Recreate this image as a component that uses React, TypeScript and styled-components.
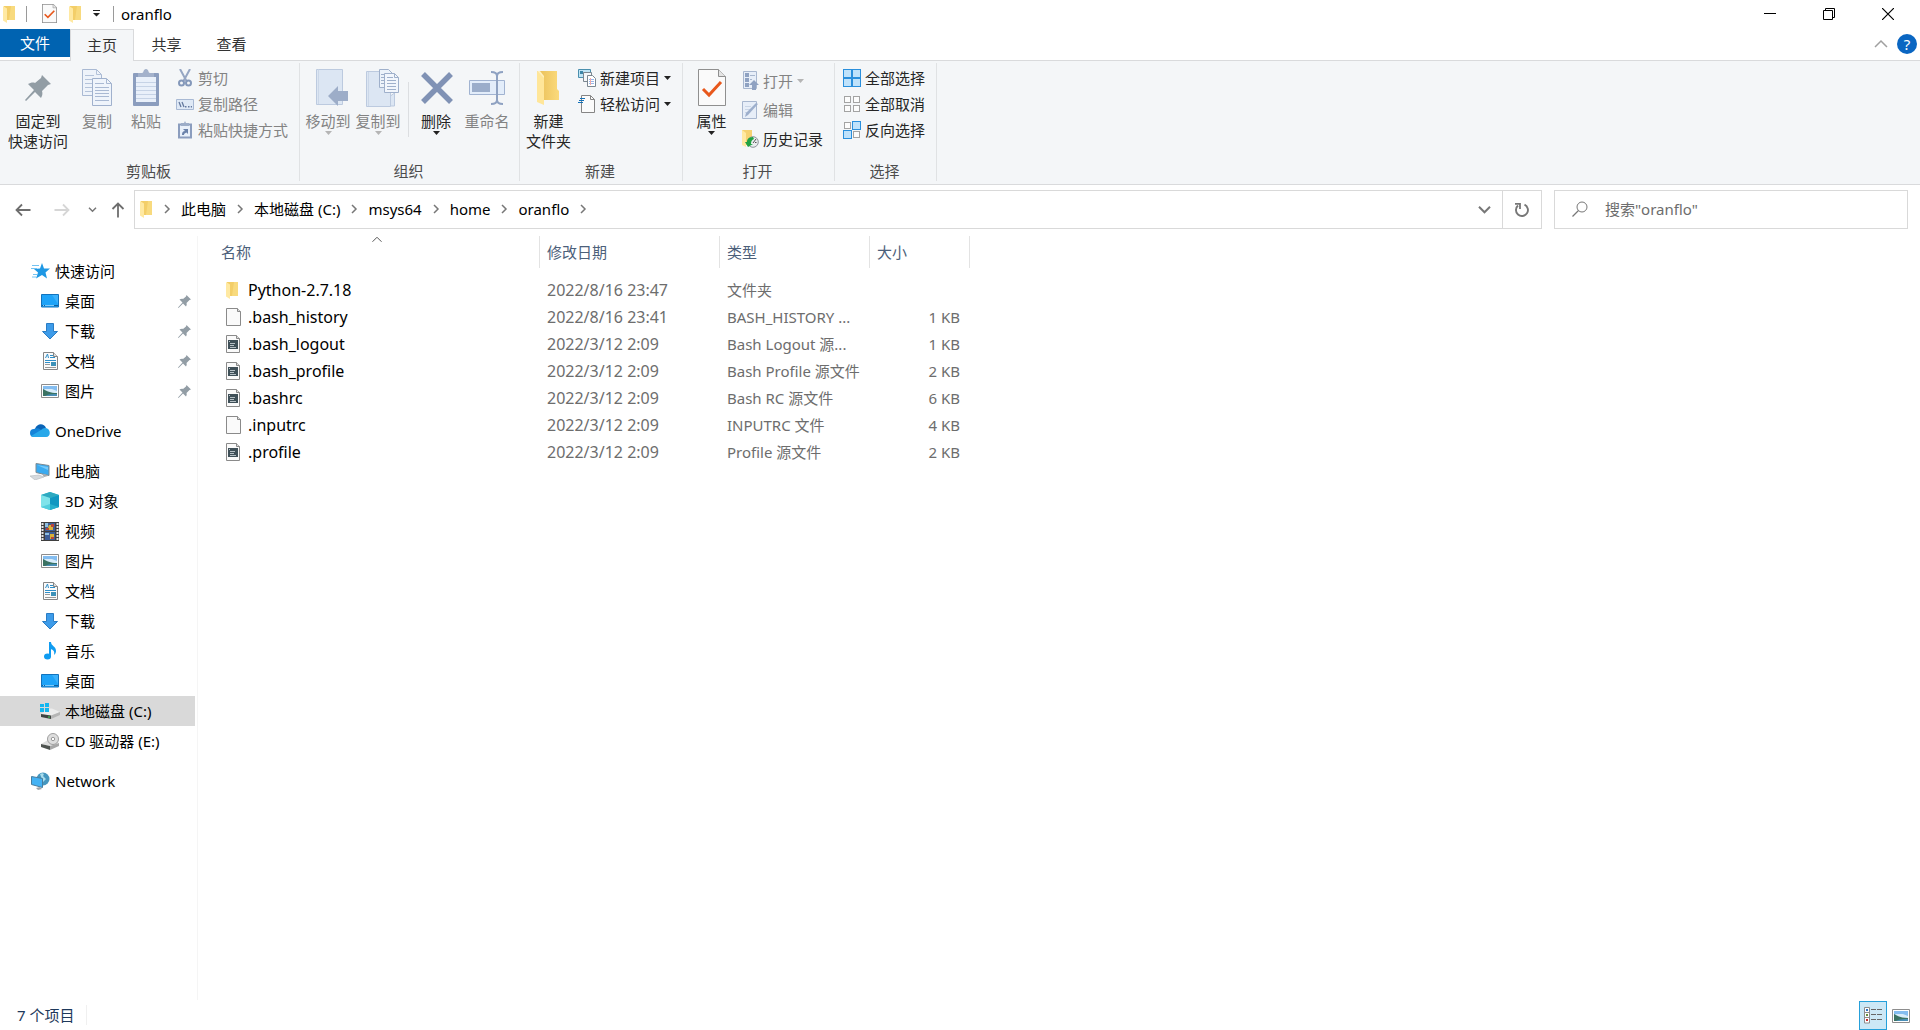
import React from "react";
import styled, { createGlobalStyle, css } from "styled-components";

const GlobalStyle = createGlobalStyle`
  * { box-sizing: border-box; }
  body {
    margin: 0;
    background: #fff;
    color: #000;
    font: 15px/20px "Noto Sans", "Noto Sans CJK SC", sans-serif;
  }
  button, input { font: inherit; color: inherit; }
  svg { display: block; flex: none; }
`;

const plainButton = css`
  padding: 0;
  border: 0;
  background: none;
  cursor: default;
`;

/* ---------- icons ---------- */

const FolderSmall = () => (
  <svg width="13" height="18" viewBox="0 0 13 18">
    <path d="M1 1h11v14H1z" fill="#f3ce68" />
    <path d="M8 1h4v14H6z" fill="#f8da7e" />
    <path d="M0 1l4 2.500V18L0 15.500z" fill="#ffe9a2" />
  </svg>
);

const FolderLarge = () => (
  <svg width="26" height="36" viewBox="0 0 26 36">
    <defs>
      <linearGradient id="folderBack" x1="0" x2="1">
        <stop offset="0" stopColor="#e9bf57" />
        <stop offset="1" stopColor="#fbda7c" />
      </linearGradient>
    </defs>
    <path d="M1 1h20v18l2 2v9H6z" fill="url(#folderBack)" />
    <path d="M1 1l7 6v28L1 32z" fill="#ffe699" />
    <path d="M1 1h3l4 5v2z" fill="#fff0bd" />
  </svg>
);

const CheckPage = ({ large }: { large?: boolean }) => (
  <svg width={large ? 28 : 15} height={large ? 37 : 19} viewBox="0 0 28 37" preserveAspectRatio="none">
    <path d="M.5.500h20l7 7v29H.5z" fill="#fafafa" stroke="#8f8f8f" strokeWidth={large ? 1 : 2} />
    <path d="M20.500.500v7h7" fill="#e4e4e4" stroke="#8f8f8f" />
    <path d="M5 20l6 6L23 13" fill="none" stroke="#e8581c" strokeWidth="3" />
  </svg>
);

const Caret = ({ color = "#222" }: { color?: string }) => (
  <svg width="7" height="4" viewBox="0 0 7 4">
    <path d="M0 0h7L3.500 4z" fill={color} />
  </svg>
);

const CustomizeIcon = () => (
  <svg width="7" height="7" viewBox="0 0 7 7">
    <path d="M0 0h7v1H0zM0 3h7L3.500 6.500z" fill="#222" />
  </svg>
);

const Pin = ({ size }: { size: number }) => (
  <svg width={size} height={size} viewBox="0 0 26 26">
    <path d="M17 0l9 9-3 1-6 6c1 3 0 5-1 7l-6-6L1 26l-1-1 9-10-6-6c2-1 5-2 7-1l6-5z" fill="#929da5" />
  </svg>
);

const CopyLarge = () => (
  <svg width="30" height="37" viewBox="0 0 30 37">
    <path d="M.5.500h14l5 5v21H.5z" fill="#eef3fa" stroke="#a9b9d3" />
    <path d="M14.500.500v5h5M3 6.500h9M3 10.500h8M3 14.500h8M3 18.500h8M3 22.500h8" fill="none" stroke="#b4c3da" />
    <path d="M10.500 9.500h14l5 5v22h-19z" fill="#eff4fb" stroke="#a0b1cd" />
    <path d="M24.500 9.500v5h5M13 14.500h9M13 18.500h14M13 21.500h14M13 24.500h14M13 27.500h14M13 31.500h14" fill="none" stroke="#a9b9d3" />
  </svg>
);

const PasteLarge = () => (
  <svg width="26" height="37" viewBox="0 0 26 37">
    <rect y="4" width="26" height="33" rx="1" fill="#8b9dbe" />
    <path d="M3 8h20v25H3z" fill="#e9f0fa" />
    <path d="M3 13.500h20M3 17.500h20M3 21.500h20M3 25.500h20M3 29.500h20" stroke="#c6d3e6" />
    <path d="M5 4h4c2 0 1-4 4-4s2 4 4 4h4v4H5z" fill="#a3b1cb" />
  </svg>
);

const Scissors = () => (
  <svg width="14" height="18" viewBox="0 0 14 18">
    <path d="M2 0l6.500 12M12 0L5.500 12" stroke="#96a6c3" strokeWidth="2" />
    <circle cx="3.500" cy="14" r="2.500" fill="none" stroke="#8498ba" strokeWidth="2" />
    <circle cx="10.500" cy="14" r="2.500" fill="none" stroke="#8498ba" strokeWidth="2" />
  </svg>
);

const CopyPath = () => (
  <svg width="18" height="11" viewBox="0 0 18 11">
    <path d="M.5.500h17v10H.5z" fill="#dfe9f6" stroke="#a8b9d4" />
    <path d="M3 3l2 5M6 3l2 5" stroke="#64799f" strokeWidth="1.300" />
    <path d="M9 7h1.500v1.500H9zM12 7h1.500v1.500H12zM14.800 7h1.200v1.500h-1.200z" fill="#64799f" />
  </svg>
);

const PasteShortcut = () => (
  <svg width="14" height="18" viewBox="0 0 14 18">
    <path d="M1 3.500h12v13H1z" fill="#e9f0fa" stroke="#8b9dbe" strokeWidth="2" />
    <path d="M3 2h3l1-2 1 2h3v3H3z" fill="#9dadc8" />
    <path d="M4 14c0-3 1-4 3-4L5 8h5v5L8.500 11.500C7 12 6 12.500 6 14z" fill="#6b82aa" />
  </svg>
);

const MoveTo = () => (
  <svg width="41" height="37" viewBox="-8 0 41 37">
    <path d="M.5.500h26v35H.5z" fill="#dce6f3" stroke="#bccadf" />
    <path d="M2.500.500V35" stroke="#cbd7e8" />
    <path d="M12 27l10-10v5h10v10H22v5z" fill="#9dadc8" />
  </svg>
);

const CopyTo = () => (
  <svg width="42" height="38" viewBox="-9 0 42 38">
    <path d="M.5 2.500h24v35H.5zM24.500 27l4-3v13h-4z" fill="#dce6f3" stroke="#bccadf" />
    <path d="M2.500 3v34" stroke="#cbd7e8" />
    <path d="M13.500.500h9l4 4v14h-13z" fill="#edf3fa" stroke="#9fb0cb" />
    <path d="M18.500 4.500h10l4 4v15h-14z" fill="#f2f6fc" stroke="#9fb0cb" />
    <path d="M28.500 4.500v4h4M21 8.500h6M21 11.500h9M21 14.500h9M21 17.500h9M21 20.500h9M15 5.500h3M15 8.500h3M15 11.500h3M15 14.500h3" fill="none" stroke="#9fb0cb" />
  </svg>
);

const DeleteIcon = () => (
  <svg width="34" height="32" viewBox="-2 0 34 32">
    <path d="M2 2l28 28M30 2L2 30" stroke="#8092b5" strokeWidth="5.500" />
  </svg>
);

const RenameIcon = () => (
  <svg width="36" height="34" viewBox="0 0 36 34">
    <path d="M.5 9.500h35v14H.5z" fill="#e3edfa" stroke="#a1b3d1" />
    <path d="M3 12h18v9H3z" fill="#9badca" />
    <path d="M22 1c4 0 6 1 6 4v24c0 3-2 4-6 4M34 1c-4 0-6 1-6 4v24c0 3 2 4 6 4" fill="none" stroke="#8fa2c2" strokeWidth="2" />
  </svg>
);

const NewItem = () => (
  <svg width="18" height="18" viewBox="0 0 18 18">
    <path d="M.5.500h12v8H.5z" fill="#bfe4f5" stroke="#4a8fae" />
    <path d="M2 2h3v3H2z" fill="#3c86a8" />
    <path d="M5.500 3.500h8v9h-8z" fill="#f5f7f9" stroke="#7b8791" />
    <path d="M9.500 6.500h5l3 3v8h-8z" fill="#fff" stroke="#7b8791" />
    <path d="M11 10.500h5M11 12.500h5M11 14.500h5" stroke="#98b7ec" />
    <path d="M12.500 9v7" stroke="#f0a9a9" />
  </svg>
);

const EasyAccess = () => (
  <svg width="18" height="18" viewBox="0 0 18 18">
    <path d="M3.500.500h9l4 4v13h-13z" fill="#fbfbfb" stroke="#858585" />
    <path d="M12.500.500v4h4" fill="none" stroke="#858585" />
    <path d="M2 3.500h5M1 5.500h5M0 7.500h5" stroke="#1672b8" strokeWidth="1.200" />
  </svg>
);

const OpenIcon = () => (
  <svg width="17" height="19" viewBox="0 0 17 19">
    <path d="M1.500.500h13v17h-13z" fill="#e7eef8" stroke="#a8b7cf" />
    <path d="M3 2h4v4H3zM3 7h4v4H3zM3 12h4v4H3z" fill="#8fa2c2" />
    <path d="M8 4.500h5M8 8.500h2" stroke="#a7b6cd" />
    <path d="M12 9l5 5h-3v5h-4v-5H7z" fill="#8fa2c2" />
  </svg>
);

const EditIcon = () => (
  <svg width="16" height="18" viewBox="0 0 16 18">
    <path d="M.5.500h14v17H.5z" fill="#e7eef8" stroke="#a8b7cf" />
    <path d="M3 5.500h6M3 8.500h5M3 11.500h3" stroke="#c9d5e6" />
    <path d="M3 16l1-4L14 2l2 1L6 14z" fill="#9dafcc" />
  </svg>
);

const HistoryIcon = () => (
  <svg width="18" height="18" viewBox="0 0 18 18">
    <path d="M1 0h10v15H1z" fill="#f5d271" />
    <path d="M1 0l4 3v14l-4-2z" fill="#ffe9a2" />
    <circle cx="12" cy="12" r="5.300" fill="#e9ecee" stroke="#8c949a" />
    <path d="M12 13l3-4M14 12.500h1.500" fill="none" stroke="#555" />
    <path d="M12 7c-5 0-6 3-6 5H4l3 5 5-3h-2c0-3 1-4 3-5z" fill="#21a243" />
  </svg>
);

const SelectIcon = ({ filled }: { filled: boolean[] }) => (
  <svg width="18" height="18" viewBox="0 0 18 18">
    {filled.map((on, i) => {
      const x = (i % 2) * 9;
      const y = Math.floor(i / 2) * 9;
      return on ? (
        <rect key={i} x={x + 0.5} y={y + 0.5} width="8" height="8" fill="#bfe2fb" stroke="#2a8fdc" />
      ) : (
        <rect key={i} x={x + 1.5} y={y + 1.5} width="6" height="6" fill="#fcfcfc" stroke="#a3a3a3" />
      );
    })}
  </svg>
);

type ChevronProps = { dir: "right" | "down" | "up"; color?: string; w?: number; width?: number };
const Chevron = ({ dir, color = "#777", w = 7, width = 1.5 }: ChevronProps) => {
  const h = w / 2;
  const box = w + 2;
  const points = {
    right: `M${box / 2 - h / 2} 1l${h} ${h}l${-h} ${h}`,
    down: `M1 ${box / 2 - h / 2}l${h} ${h}l${h} ${-h}`,
    up: `M1 ${box / 2 + h / 2}l${h} ${-h}l${h} ${h}`,
  };
  return (
    <svg width={box} height={box} viewBox={`0 0 ${box} ${box}`}>
      <path d={points[dir]} fill="none" stroke={color} strokeWidth={width} />
    </svg>
  );
};

const Arrow = ({ dir, color }: { dir: "left" | "right" | "up"; color: string }) => {
  const turn = { left: 0, right: 180, up: 90 }[dir];
  return (
    <svg width="16" height="16" viewBox="0 0 16 16">
      <path d="M15.500 8H1.500M7 2.500L1.500 8L7 13.500" transform={`rotate(${turn} 8 8)`} fill="none" stroke={color} strokeWidth="1.800" />
    </svg>
  );
};

const RefreshIcon = () => (
  <svg width="16" height="16" viewBox="0 0 16 16">
    <path d="M10.500 2.600A6 6 0 1 1 4 3.500" fill="none" stroke="#777" strokeWidth="1.900" />
    <path d="M1 1.900h5v5" fill="none" stroke="#777" strokeWidth="1.800" />
  </svg>
);

const SearchIcon = () => (
  <svg width="16" height="16" viewBox="0 0 16 16">
    <circle cx="10" cy="6" r="5" fill="none" stroke="#777" />
    <path d="M6.500 9.500L.5 15.500" stroke="#777" strokeWidth="1.200" />
  </svg>
);

const StarIcon = () => (
  <svg width="19" height="16" viewBox="0 0 19 16">
    <path d="M11 0l2 5.500h6l-4.500 4 1.500 6L11 12l-6 3.500L7 9.500 3 6l6-.5z" fill="#1f98e4" />
    <path d="M1 2.500h7M0 5.500h6M2 11.500h4M1 14h4" stroke="#74c3f2" />
  </svg>
);

const DesktopIcon = () => (
  <svg width="18" height="14" viewBox="0 0 18 14">
    <path d="M.5.500h17v12.500H.5z" fill="#1ea3f8" stroke="#1273bd" />
    <path d="M11 1h6v9z" fill="#3bb1fb" />
    <path d="M1 11.500h16" stroke="#0e5f9d" />
    <path d="M2 11.500h1M4 11.500h9" stroke="#7fcbfa" />
  </svg>
);

const DownloadIcon = () => (
  <svg width="16" height="17" viewBox="0 0 16 17">
    <path d="M4.500.500h7v8h4L8 16 .5 8.500h4z" fill="#3d9be9" stroke="#2a7cc4" />
  </svg>
);

const DocumentIcon = () => (
  <svg width="15" height="18" viewBox="0 0 15 18">
    <path d="M.5.500h10l4 4v13H.5z" fill="#fbfbfb" stroke="#858585" />
    <path d="M10.500.500v4h4" fill="#ddd" stroke="#858585" />
    <path d="M2.500 6l2-4 1 4M7 3.500h3M7 5.500h5M2 8.500h11M2 10.500h5" fill="none" stroke="#2f8fc9" />
    <path d="M2 12.500h5M2 15.500h11" stroke="#999" />
    <path d="M8 10h5v4H8z" fill="#3d91b8" />
  </svg>
);

const PictureIcon = () => (
  <svg width="18" height="14" viewBox="0 0 18 14">
    <path d="M.5.500h17v13H.5z" fill="#fff" stroke="#8d8d8d" />
    <path d="M2 2h14v10H2z" fill="#84bdf0" />
    <path d="M4 5h7l5 2v2H2V6z" fill="#d8ecfa" />
    <path d="M2 5c4 2 7 4 14 4v3H2z" fill="#3b7363" />
    <path d="M4 12c4-2 8-2 12-2v2z" fill="#4a8fb8" />
  </svg>
);

const CloudIcon = () => (
  <svg width="20" height="14" viewBox="0 0 20 14">
    <path d="M5 5c2-6 9-6 11-1l-4 5-8-2z" fill="#0a64b7" />
    <path d="M4 13a4 4 0 0 1 0-8c4-2 6 0 11 4l-2 4z" fill="#1583d8" />
    <path d="M16 4c5 1 5 9 0 9H4c-2 0-3-1-3-1l10-6c2-2 4-2 5-2z" fill="#28a8ea" />
  </svg>
);

const ComputerIcon = () => (
  <svg width="20" height="17" viewBox="0 0 20 17">
    <path d="M6 .5l13 2v10l-13-3z" fill="#3aaaf0" stroke="#7f8a91" />
    <path d="M7 2l11 2v3z" fill="#75cafa" />
    <path d="M12 11l2 3 4-1-3-2z" fill="#a5abb0" />
    <path d="M0 13l9-1 5 2-9 3z" fill="#d5d9dd" stroke="#b4b9bd" strokeWidth=".6" />
  </svg>
);

const CubeIcon = () => (
  <svg width="18" height="18" viewBox="0 0 18 18">
    <path d="M9 0l9 3v12l-9 3-9-3V3z" fill="#35bfd3" />
    <path d="M9 0l9 3-9 3-9-3z" fill="#2ea9c0" />
    <path d="M0 3l9 3v12l-9-3z" fill="#7fe3ea" />
    <path d="M18 3L9 6v12l9-3z" fill="#1197c1" />
    <path d="M0 15l9-3 9 3-9 3z" fill="#35bfd3" opacity=".6" />
  </svg>
);

const VideoIcon = () => (
  <svg width="18" height="19" viewBox="0 0 18 19">
    <path d="M0 0h18v19H0z" fill="#3f3f3f" />
    <path d="M1.500 1v18M16.500 1v18" stroke="#e8e8e8" strokeDasharray="2 1" strokeWidth="2" />
    <path d="M4 1h10v8H4zM4 10h10v8H4z" fill="#3d5e98" />
    <path d="M8 3h4v5H6zM9 12h4v5H9z" fill="#d9b13a" />
    <path d="M10 2h3v3h-3zM5 6h3v2H5zM10 15h3v2h-3z" fill="#b8463a" />
    <path d="M4 1h3v4H4zM4 11h4v2H4z" fill="#8fbfe0" />
  </svg>
);

const MusicIcon = () => (
  <svg width="12" height="18" viewBox="0 0 12 18">
    <ellipse cx="3.500" cy="14.500" rx="3.500" ry="3" fill="#109cf1" />
    <path d="M5 0h2c0 4 5 4 5 9 0 2-1 3-2 4 1-4-1-5-3-6v8H5z" fill="#109cf1" />
  </svg>
);

const DriveIcon = () => (
  <svg width="20" height="16" viewBox="0 0 20 16">
    <path d="M1 11L9 5.500h3l8 3.500-9 4z" fill="#ececec" />
    <path d="M1 11l10 1.500V16L1 14z" fill="#3e4441" />
    <path d="M11 12.500L20 9v3l-9 4z" fill="#b5b5b5" />
    <path d="M8 13.500h2v1H8z" fill="#41d95b" />
    <path d="M0 1h4v3H0zM5 0h4v4H5zM0 5h4v4H0zM5 5h4v4H5z" fill="#13b6ef" />
  </svg>
);

const CdIcon = () => (
  <svg width="20" height="17" viewBox="0 0 20 17">
    <path d="M1 11l7-4h5l6 3-9 3z" fill="#dedede" />
    <path d="M1 11l9 2v4l-9-3z" fill="#4e5350" />
    <path d="M10 13l9-3v3l-9 4z" fill="#a8a8a8" />
    <circle cx="13" cy="6" r="5.500" fill="#dedede" stroke="#9f9f9f" />
    <circle cx="13" cy="6" r="1.700" fill="#fff" stroke="#999" />
  </svg>
);

const NetworkIcon = () => (
  <svg width="19" height="18" viewBox="0 0 19 18">
    <circle cx="12" cy="7" r="6.500" fill="#4596be" />
    <path d="M9 2c3-2 5 0 3 2l3 3-3 3z" fill="#a8dcec" />
    <path d="M.5 4.500l11 2v9l-11-3z" fill="#43b2f4" stroke="#477d9f" />
    <path d="M5 16l4-1 2 2-4 1z" fill="#9da4a9" />
  </svg>
);

const BlankFile = () => (
  <svg width="15" height="18" viewBox="0 0 15 18">
    <path d="M.5.500h11l3 3v14H.5z" fill="#fafafa" stroke="#8a8a8a" />
    <path d="M11.500.500v3h3" fill="#ddd" stroke="#8a8a8a" />
  </svg>
);

const ScriptFile = () => (
  <svg width="14" height="18" viewBox="0 0 14 18">
    <path d="M.5.500h10l3 3v14H.5z" fill="#fafafa" stroke="#8a8a8a" />
    <path d="M10.500.500v3h3" fill="#ddd" stroke="#8a8a8a" />
    <path d="M2 5h10v9H2z" fill="#3f5058" />
    <path d="M3 6.500h1M4 8.500h5M4 10.500h4M4 12.500h6" stroke="#b6c0c5" />
  </svg>
);

const DetailsIcon = () => (
  <svg width="18" height="17" viewBox="0 0 18 17">
    <path d="M.5.500h5v15.500h-5zM.5 5.500h5M.5 10.500h5" fill="#fff" stroke="#8d8d8d" />
    <path d="M7 2.500h5M13 2.500h5M7 7.500h5M13 7.500h5M7 12.500h5M13 12.500h5" stroke="#666" />
    <path d="M2 2h2v2H2z" fill="#2d73c4" />
    <path d="M2 7h2v2H2z" fill="#6b8f3c" />
    <path d="M2 12h2v2H2z" fill="#cc2b2b" />
  </svg>
);

/* ---------- window chrome ---------- */

const Window = styled.div`
  display: flex;
  flex-direction: column;
  min-height: 100vh;
`;

const TitleBar = styled.header`
  display: flex;
  align-items: center;
  height: 29px;
  padding: 0 3px 2px 0;
`;

const QuickButton = styled.button<{ $w: number; $gap?: number }>`
  ${plainButton}
  display: flex;
  justify-content: center;
  width: ${(p) => p.$w}px;
  margin-right: ${(p) => p.$gap ?? 0}px;
`;

const TitleRule = styled.span`
  width: 1px;
  height: 16px;
  background: #9a9a9a;
`;

const Title = styled.h1`
  flex: 1;
  margin: 0 0 0 7px;
  font-size: 15px;
  font-weight: 400;
`;

const CaptionButton = styled.button`
  ${plainButton}
  display: flex;
  align-items: center;
  justify-content: center;
  width: 59px;
  height: 27px;
`;

const TabBar = styled.nav`
  display: flex;
  height: 32px;
  border-bottom: 1px solid #d9dadc;
`;

const Tab = styled.button<{ $kind?: "file" | "active" }>`
  ${plainButton}
  width: 65px;
  height: 31px;
  padding-bottom: 2px;
  color: #333;
  ${(p) =>
    p.$kind === "file" &&
    css`
      width: 70px;
      height: 28px;
      padding-bottom: 0;
      background: #0063b1;
      color: #fff;
    `}
  ${(p) =>
    p.$kind === "active" &&
    css`
      width: 64px;
      height: 32px;
      border: 1px solid #d9dadc;
      border-bottom: 0;
      background: #f4f6f8;
    `}
`;

const TabBarEnd = styled.div`
  display: flex;
  align-items: center;
  gap: 9px;
  margin-left: auto;
  padding: 0 3px 2px 0;
`;

const HelpButton = styled.button`
  ${plainButton}
  width: 20px;
  height: 20px;
  border-radius: 50%;
  background: #0a66c2;
  color: #fff;
`;

const IconButton = styled.button`
  ${plainButton}
  display: flex;
  align-items: center;
  justify-content: center;
`;

/* ---------- ribbon ---------- */

const Ribbon = styled.div`
  display: flex;
  padding: 2px 0 3px;
  border-bottom: 1px solid #d9dadc;
  background: #f4f6f8;
`;

const Group = styled.section<{ $w: number }>`
  display: flex;
  flex-direction: column;
  width: ${(p) => p.$w}px;
  border-right: 1px solid #e0e2e4;
`;

const GroupBody = styled.div<{ $pad?: number }>`
  display: flex;
  height: 98px;
  padding-left: ${(p) => p.$pad ?? 0}px;
`;

const GroupName = styled.h2`
  margin: 0;
  padding-right: 2px;
  color: #4c4c4c;
  font-size: 15px;
  font-weight: 400;
  text-align: center;
`;

const LargeButton = styled.button<{ $w: number; $off?: boolean }>`
  ${plainButton}
  display: flex;
  flex-direction: column;
  align-items: center;
  width: ${(p) => p.$w}px;
  padding-top: 4px;
  color: ${(p) => (p.$off ? "#838383" : "#262626")};
  white-space: pre-line;
`;

const LargeIcon = styled.span`
  display: flex;
  align-items: center;
  height: 41px;
  margin-bottom: 3px;
`;

const RibbonRule = styled.span`
  width: 1px;
  height: 55px;
  margin: 19px 0 0 5px;
  background: #dcdee1;
`;

const SmallList = styled.div<{ $row: number; $pad: number }>`
  display: grid;
  grid-auto-rows: ${(p) => p.$row}px;
  align-content: start;
  justify-items: start;
  padding: ${(p) => (p.$row > 26 ? 3 : 2)}px 0 0 ${(p) => p.$pad}px;
`;

const SmallButton = styled.button<{ $off?: boolean }>`
  ${plainButton}
  display: flex;
  align-items: center;
  gap: 4px;
  color: ${(p) => (p.$off ? "#838383" : "#262626")};
  white-space: nowrap;
`;

const SmallIcon = styled.span`
  display: flex;
  justify-content: center;
  width: 18px;
`;

type ButtonProps = { off?: boolean; icon: React.ReactNode; label: string; menu?: boolean };

const Large = ({ w, off, icon, label, menu }: ButtonProps & { w: number }) => (
  <LargeButton $w={w} $off={off}>
    <LargeIcon>{icon}</LargeIcon>
    {label}
    {menu && <Caret color={off ? "#b5b5b5" : undefined} />}
  </LargeButton>
);

const Small = ({ off, icon, label, menu }: ButtonProps) => (
  <SmallButton $off={off}>
    <SmallIcon>{icon}</SmallIcon>
    {label}
    {menu && <Caret color={off ? "#b5b5b5" : undefined} />}
  </SmallButton>
);

/* ---------- address row ---------- */

const AddressRow = styled.div`
  display: flex;
  align-items: center;
  padding: 5px 12px 0 0;
`;

const NavButtons = styled.div`
  display: grid;
  grid-template-columns: 46px 32px 28px 24px;
  width: 134px;
  justify-items: center;
`;

const AddressBox = styled.div`
  display: flex;
  flex: 1;
  align-items: stretch;
  height: 39px;
  border: 1px solid #d9d9d9;
`;

const Crumbs = styled.ol`
  display: flex;
  flex: 1;
  align-items: center;
  margin: 0;
  padding: 0 0 2px 5px;
  list-style: none;
`;

const Crumb = styled.li`
  display: flex;
  align-items: center;
`;

const CrumbMark = styled.span`
  margin: 0 9px;
`;

const CrumbLink = styled.a`
  color: #000;
  text-decoration: none;
`;

const BoxButton = styled.button<{ $ruled?: boolean }>`
  ${plainButton}
  display: flex;
  align-items: center;
  justify-content: center;
  width: ${(p) => (p.$ruled ? 39 : 36)}px;
  border-left: ${(p) => (p.$ruled ? "1px solid #d9d9d9" : "0")};
`;

const SearchBox = styled.label`
  display: flex;
  align-items: center;
  gap: 17px;
  width: 354px;
  height: 39px;
  margin-left: 12px;
  padding: 0 0 2px 17px;
  border: 1px solid #d9d9d9;
`;

const SearchInput = styled.input`
  flex: 1;
  min-width: 0;
  padding: 0;
  border: 0;
  outline: 0;
  background: none;

  &::placeholder { color: #6d6d6d; opacity: 1; }
`;

/* ---------- body ---------- */

const Body = styled.div`
  display: flex;
  flex: 1;
  padding-top: 7px;
`;

const Sidebar = styled.nav`
  display: flex;
  flex-direction: column;
  gap: 10px;
  width: 198px;
  padding: 20px 2px 0 0;
  border-right: 1px solid #f5f5f5;
`;

const Tree = styled.ul`
  margin: 0;
  padding: 0;
  list-style: none;
`;

const TreeLink = styled.a<{ $child?: boolean; $selected?: boolean }>`
  display: flex;
  align-items: center;
  gap: 5px;
  height: 30px;
  padding: 0 4px 0 ${(p) => (p.$child ? 40 : 30)}px;
  background: ${(p) => (p.$selected ? "#d9d9d9" : "none")};
  color: #000;
  text-decoration: none;
`;

const TreeIcon = styled.span`
  display: flex;
  justify-content: center;
  width: 20px;
`;

const TreeLabel = styled.span`
  flex: 1;
`;

const Content = styled.main`
  flex: 1;
  padding-left: 16px;
`;

const FileTable = styled.table`
  width: 756px;
  border-collapse: separate;
  border-spacing: 0;
  table-layout: fixed;

  tbody::before {
    display: block;
    height: 8px;
    content: "";
  }
`;

const HeadCell = styled.th<{ $w: number }>`
  position: relative;
  width: ${(p) => p.$w}px;
  height: 32px;
  padding: 0 7px;
  border-right: 1px solid #e3e3e3;
  font-weight: 400;
  text-align: left;
`;

const SortButton = styled.button`
  ${plainButton}
  color: #4c607a;
`;

const SortMark = styled.span`
  position: absolute;
  top: -2px;
  left: 50%;
  transform: translateX(-50%);
`;

const Cell = styled.td<{ $right?: boolean; $latin?: boolean }>`
  height: 27px;
  padding: 0 ${(p) => (p.$right ? 10 : 7)}px 0 7px;
  overflow: hidden;
  color: #6d6d6d;
  font-size: ${(p) => (p.$latin ? 16 : 15)}px;
  text-align: ${(p) => (p.$right ? "right" : "left")};
  text-overflow: ellipsis;
  white-space: nowrap;
`;

const FileName = styled.a`
  display: flex;
  align-items: center;
  gap: 7px;
  padding-left: 5px;
  color: #000;
  text-decoration: none;
`;

const FileIcon = styled.span`
  width: 15px;
`;

const StatusBar = styled.footer`
  display: flex;
  align-items: center;
  height: 29px;
  margin-top: 1px;
  padding: 0 10px 0 17px;
  color: #1e395b;
`;

const Count = styled.span`
  flex: 1;
  padding-bottom: 2px;
`;

const CountText = styled.span`
  display: inline-block;
  padding-right: 12px;
  border-right: 1px solid #f0f0f0;
`;

const ViewButton = styled.button<{ $on?: boolean }>`
  ${plainButton}
  display: flex;
  align-items: center;
  justify-content: center;
  width: ${(p) => (p.$on ? 28 : 18)}px;
  height: 29px;
  margin-left: 5px;
  border: ${(p) => (p.$on ? "1px solid #26a0da" : "0")};
  background: ${(p) => (p.$on ? "#cce8f6" : "none")};
`;

/* ---------- data ---------- */

type Node = { label: string; icon: React.ReactNode; child?: boolean; pinned?: boolean; selected?: boolean };

const sections: Node[][] = [
  [
    { label: "快速访问", icon: <StarIcon /> },
    { label: "桌面", icon: <DesktopIcon />, child: true, pinned: true },
    { label: "下载", icon: <DownloadIcon />, child: true, pinned: true },
    { label: "文档", icon: <DocumentIcon />, child: true, pinned: true },
    { label: "图片", icon: <PictureIcon />, child: true, pinned: true },
  ],
  [{ label: "OneDrive", icon: <CloudIcon /> }],
  [
    { label: "此电脑", icon: <ComputerIcon /> },
    { label: "3D 对象", icon: <CubeIcon />, child: true },
    { label: "视频", icon: <VideoIcon />, child: true },
    { label: "图片", icon: <PictureIcon />, child: true },
    { label: "文档", icon: <DocumentIcon />, child: true },
    { label: "下载", icon: <DownloadIcon />, child: true },
    { label: "音乐", icon: <MusicIcon />, child: true },
    { label: "桌面", icon: <DesktopIcon />, child: true },
    { label: "本地磁盘 (C:)", icon: <DriveIcon />, child: true, selected: true },
    { label: "CD 驱动器 (E:)", icon: <CdIcon />, child: true },
  ],
  [{ label: "Network", icon: <NetworkIcon /> }],
];

const files = [
  { name: "Python-2.7.18", date: "2022/8/16 23:47", type: "文件夹", size: "", icon: <FolderSmall /> },
  { name: ".bash_history", date: "2022/8/16 23:41", type: "BASH_HISTORY ...", size: "1 KB", icon: <BlankFile /> },
  { name: ".bash_logout", date: "2022/3/12 2:09", type: "Bash Logout 源...", size: "1 KB", icon: <ScriptFile /> },
  { name: ".bash_profile", date: "2022/3/12 2:09", type: "Bash Profile 源文件", size: "2 KB", icon: <ScriptFile /> },
  { name: ".bashrc", date: "2022/3/12 2:09", type: "Bash RC 源文件", size: "6 KB", icon: <ScriptFile /> },
  { name: ".inputrc", date: "2022/3/12 2:09", type: "INPUTRC 文件", size: "4 KB", icon: <BlankFile /> },
  { name: ".profile", date: "2022/3/12 2:09", type: "Profile 源文件", size: "2 KB", icon: <ScriptFile /> },
];

const columns = [
  { label: "名称", w: 326, sorted: true },
  { label: "修改日期", w: 180 },
  { label: "类型", w: 150 },
  { label: "大小", w: 100 },
];

const path = ["此电脑", "本地磁盘 (C:)", "msys64", "home", "oranflo"];

export default function App() {
  return (
    <Window>
      <GlobalStyle />
      <TitleBar>
        <QuickButton $w={18} $gap={8} aria-label="窗口菜单"><FolderSmall /></QuickButton>
        <TitleRule />
        <QuickButton $w={44} aria-label="属性"><CheckPage /></QuickButton>
        <QuickButton $w={8} aria-label="新建文件夹"><FolderSmall /></QuickButton>
        <QuickButton $w={34} aria-label="自定义快速访问工具栏"><CustomizeIcon /></QuickButton>
        <TitleRule />
        <Title>oranflo</Title>
        <CaptionButton aria-label="最小化">
          <svg width="12" height="12" viewBox="0 0 12 12"><path d="M0 5.500h12" stroke="#000" /></svg>
        </CaptionButton>
        <CaptionButton aria-label="还原">
          <svg width="12" height="12" viewBox="0 0 12 12"><path d="M.5 2.500h9v9h-9zM2.500 2.500v-2h9v9h-2" fill="none" stroke="#000" /></svg>
        </CaptionButton>
        <CaptionButton aria-label="关闭">
          <svg width="12" height="12" viewBox="0 0 12 12"><path d="M0 0l12 12M12 0L0 12" stroke="#000" strokeWidth="1.200" /></svg>
        </CaptionButton>
      </TitleBar>
      <TabBar>
        <Tab $kind="file">文件</Tab>
        <Tab $kind="active">主页</Tab>
        <Tab>共享</Tab>
        <Tab>查看</Tab>
        <TabBarEnd>
          <IconButton aria-label="折叠功能区"><Chevron dir="up" w={12} color="#a0a0a0" /></IconButton>
          <HelpButton aria-label="帮助">?</HelpButton>
        </TabBarEnd>
      </TabBar>
      <Ribbon>
        <Group $w={300}>
          <GroupBody $pad={2}>
            <Large w={72} icon={<Pin size={26} />} label={"固定到\n快速访问"} />
            <Large w={46} off icon={<CopyLarge />} label="复制" />
            <Large w={52} off icon={<PasteLarge />} label="粘贴" />
            <SmallList $row={26} $pad={4}>
              <Small off icon={<Scissors />} label="剪切" />
              <Small off icon={<CopyPath />} label="复制路径" />
              <Small off icon={<PasteShortcut />} label="粘贴快捷方式" />
            </SmallList>
          </GroupBody>
          <GroupName>剪贴板</GroupName>
        </Group>
        <Group $w={220}>
          <GroupBody $pad={3}>
            <Large w={50} off menu icon={<MoveTo />} label="移动到" />
            <Large w={50} off menu icon={<CopyTo />} label="复制到" />
            <RibbonRule />
            <Large w={54} menu icon={<DeleteIcon />} label="删除" />
            <Large w={48} off icon={<RenameIcon />} label="重命名" />
          </GroupBody>
          <GroupName>组织</GroupName>
        </Group>
        <Group $w={163}>
          <GroupBody>
            <Large w={57} icon={<FolderLarge />} label={"新建\n文件夹"} />
            <SmallList $row={26} $pad={1}>
              <Small menu icon={<NewItem />} label="新建项目" />
              <Small menu icon={<EasyAccess />} label="轻松访问" />
            </SmallList>
          </GroupBody>
          <GroupName>新建</GroupName>
        </Group>
        <Group $w={152}>
          <GroupBody>
            <Large w={57} menu icon={<CheckPage large />} label="属性" />
            <SmallList $row={29} $pad={1}>
              <Small off menu icon={<OpenIcon />} label="打开" />
              <Small off icon={<EditIcon />} label="编辑" />
              <Small icon={<HistoryIcon />} label="历史记录" />
            </SmallList>
          </GroupBody>
          <GroupName>打开</GroupName>
        </Group>
        <Group $w={102}>
          <GroupBody>
            <SmallList $row={26} $pad={8}>
              <Small icon={<SelectIcon filled={[true, true, true, true]} />} label="全部选择" />
              <Small icon={<SelectIcon filled={[false, false, false, false]} />} label="全部取消" />
              <Small icon={<SelectIcon filled={[false, true, true, false]} />} label="反向选择" />
            </SmallList>
          </GroupBody>
          <GroupName>选择</GroupName>
        </Group>
      </Ribbon>
      <AddressRow>
        <NavButtons>
          <IconButton aria-label="后退"><Arrow dir="left" color="#6e6e6e" /></IconButton>
          <IconButton aria-label="前进"><Arrow dir="right" color="#d6d6d6" /></IconButton>
          <IconButton aria-label="最近浏览的位置"><Chevron dir="down" /></IconButton>
          <IconButton aria-label="向上"><Arrow dir="up" color="#6e6e6e" /></IconButton>
        </NavButtons>
        <AddressBox>
          <Crumbs>
            <Crumb>
              <FolderSmall />
              <CrumbMark><Chevron dir="right" w={8} /></CrumbMark>
            </Crumb>
            {path.map((part) => (
              <Crumb key={part}>
                <CrumbLink href="#">{part}</CrumbLink>
                <CrumbMark><Chevron dir="right" w={8} /></CrumbMark>
              </Crumb>
            ))}
          </Crumbs>
          <BoxButton aria-label="以前的位置"><Chevron dir="down" w={11} width={2} /></BoxButton>
          <BoxButton $ruled aria-label="刷新"><RefreshIcon /></BoxButton>
        </AddressBox>
        <SearchBox>
          <SearchIcon />
          <SearchInput aria-label="搜索" placeholder={'搜索"oranflo"'} />
        </SearchBox>
      </AddressRow>
      <Body>
        <Sidebar>
          {sections.map((nodes) => (
            <Tree key={nodes[0].label}>
              {nodes.map((n) => (
                <li key={n.label}>
                  <TreeLink href="#" $child={n.child} $selected={n.selected}>
                    <TreeIcon>{n.icon}</TreeIcon>
                    <TreeLabel>{n.label}</TreeLabel>
                    {n.pinned && <Pin size={13} />}
                  </TreeLink>
                </li>
              ))}
            </Tree>
          ))}
        </Sidebar>
        <Content>
          <FileTable>
            <thead>
              <tr>
                {columns.map((c) => (
                  <HeadCell key={c.label} $w={c.w} scope="col">
                    <SortButton>{c.label}</SortButton>
                    {c.sorted && <SortMark><Chevron dir="up" w={9} width={1} color="#555" /></SortMark>}
                  </HeadCell>
                ))}
              </tr>
            </thead>
            <tbody>
              {files.map((f) => (
                <tr key={f.name}>
                  <Cell $latin>
                    <FileName href="#"><FileIcon>{f.icon}</FileIcon>{f.name}</FileName>
                  </Cell>
                  <Cell $latin>{f.date}</Cell>
                  <Cell>{f.type}</Cell>
                  <Cell $right>{f.size}</Cell>
                </tr>
              ))}
            </tbody>
          </FileTable>
        </Content>
      </Body>
      <StatusBar>
        <Count><CountText>7 个项目</CountText></Count>
        <ViewButton $on aria-label="详细信息"><DetailsIcon /></ViewButton>
        <ViewButton aria-label="大图标"><PictureIcon /></ViewButton>
      </StatusBar>
    </Window>
  );
}
